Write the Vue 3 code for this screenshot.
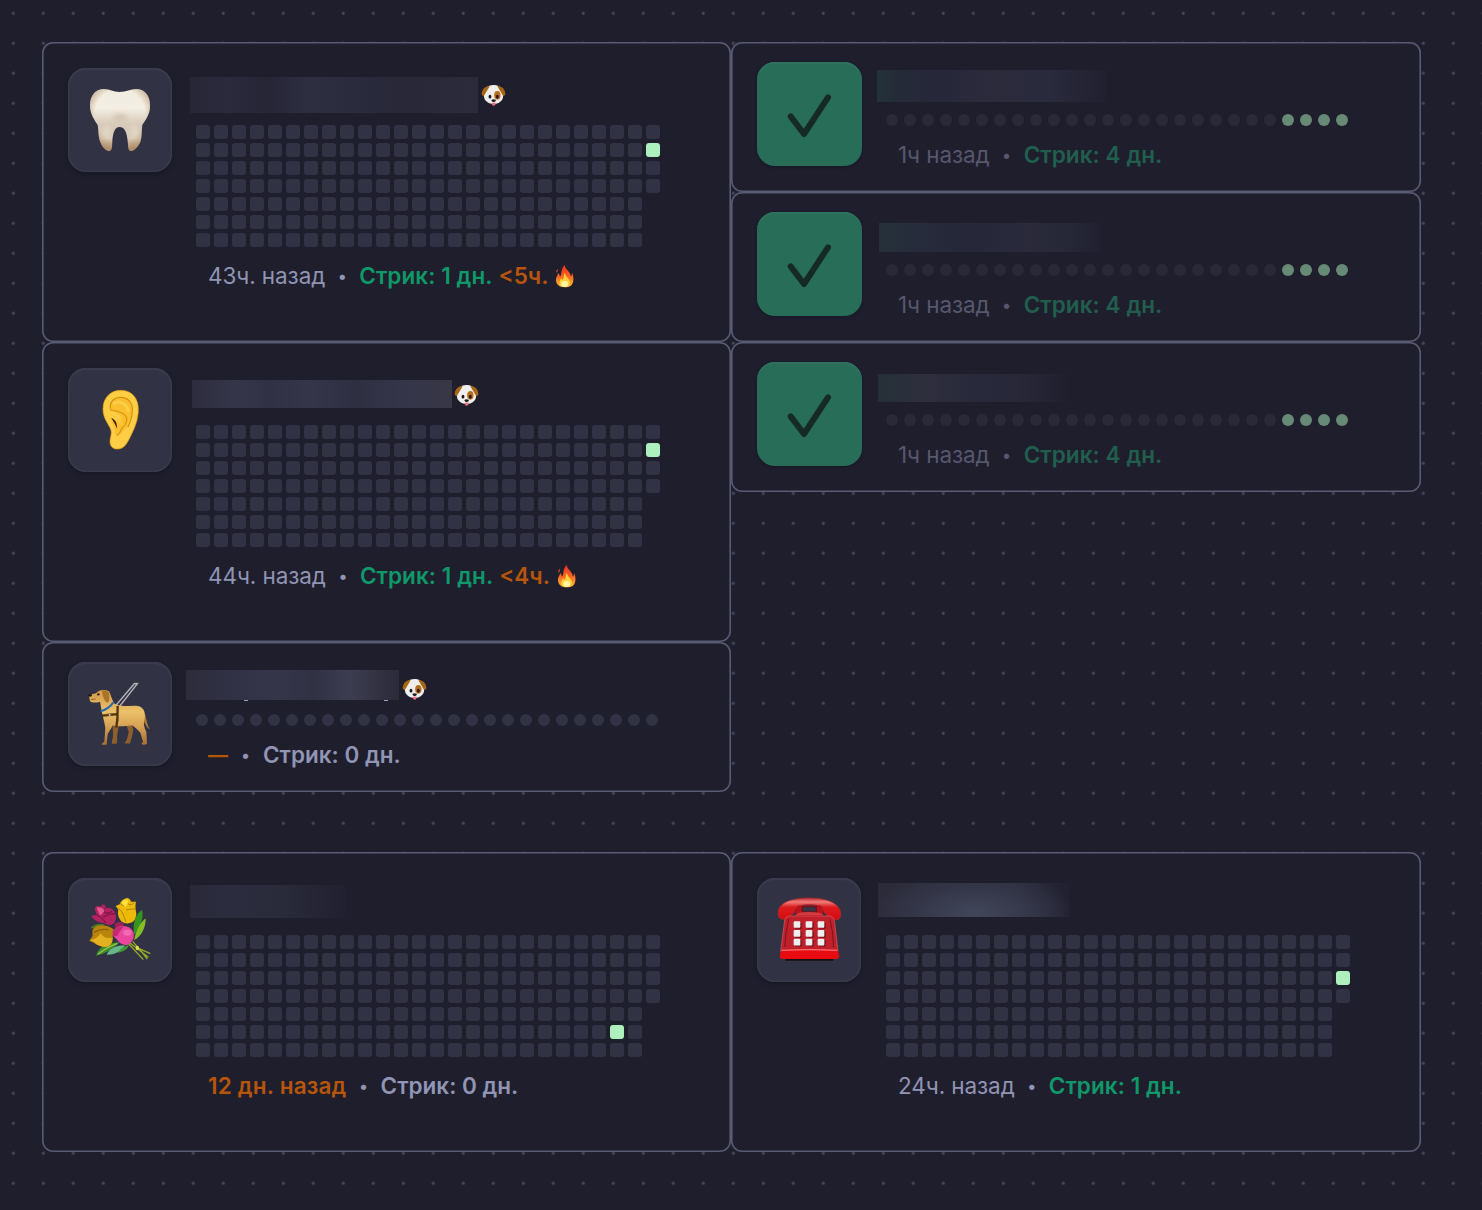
<script setup>
const columns = 26
const weeks = Array.from({ length: columns * 7 - 3 }, (_, i) => i)
const days = Array.from({ length: columns }, (_, i) => i)

const groups = [
  {
    id: 'daily',
    columns: [
      [
        { id: 'tooth', tall: true, pet: true, hit: 176, ago: '43ч. назад', streak: 'Стрик: 1 дн.', left: '<5ч.' },
        { id: 'ear', tall: true, pet: true, hit: 176, ago: '44ч. назад', streak: 'Стрик: 1 дн.', left: '<4ч.' },
        { id: 'dog', pet: true, ago: '—', late: true, streak: 'Стрик: 0 дн.', cold: true },
      ],
      [
        { id: 'first', done: true, ago: '1ч назад', streak: 'Стрик: 4 дн.' },
        { id: 'second', done: true, ago: '1ч назад', streak: 'Стрик: 4 дн.' },
        { id: 'third', done: true, ago: '1ч назад', streak: 'Стрик: 4 дн.' },
      ],
    ],
  },
  {
    id: 'weekly',
    columns: [
      [{ id: 'flowers', tall: true, hit: 166, ago: '12 дн. назад', late: true, streak: 'Стрик: 0 дн.', cold: true }],
      [{ id: 'phone', tall: true, hit: 177, ago: '24ч. назад', streak: 'Стрик: 1 дн.' }],
    ],
  },
]
</script>

<template>
  <main class="board">
    <section v-for="group in groups" :key="group.id" class="group">
      <div v-for="(column, c) in group.columns" :key="c" class="column">
        <article v-for="item in column" :key="item.id" class="card" :class="[item.id, { tall: item.tall, done: item.done }]">
          <div class="tile">
            <svg v-if="item.done" viewBox="82 94 312 312">
              <path d="M183 257 L223 310 L295 200" fill="none" stroke="#152a24" stroke-width="18" stroke-linecap="round" stroke-linejoin="round" />
            </svg>

            <svg v-else-if="item.id === 'tooth'" viewBox="114 114 312 312">
              <defs>
                <linearGradient id="enamel" x1="0" y1="0" x2="0" y2="1">
                  <stop offset="0" stop-color="#f1ece0" />
                  <stop offset=".3" stop-color="#f4efe4" />
                  <stop offset=".58" stop-color="#d6c9b7" />
                  <stop offset=".8" stop-color="#d8cbb8" />
                  <stop offset="1" stop-color="#b58d66" />
                </linearGradient>
                <radialGradient id="enamelEdge" cx=".5" cy=".42" r=".6">
                  <stop offset=".7" stop-color="#a98862" stop-opacity="0" />
                  <stop offset="1" stop-color="#a98862" stop-opacity=".65" />
                </radialGradient>
                <filter id="soft" x="-50%" y="-50%" width="200%" height="200%"><feGaussianBlur stdDeviation="8" /></filter>
              </defs>
              <path d="M220 177 C242 177 248 186 268 186 C290 186 300 177 320 177 C348 179 360 200 360 228 C360 255 345 272 337 285 C334 305 337 325 329 340 C321 354 311 363 303 363 C293 362 295 347 293 333 C291 309 284 291 269 291 C254 291 249 309 247 333 C246 350 247 363 237 363 C226 362 216 350 211 336 C204 318 206 300 203 285 C193 270 180 252 180 226 C181 199 193 179 220 177 Z" fill="url(#enamel)" />
              <path d="M220 177 C242 177 248 186 268 186 C290 186 300 177 320 177 C348 179 360 200 360 228 C360 255 345 272 337 285 C334 305 337 325 329 340 C321 354 311 363 303 363 C293 362 295 347 293 333 C291 309 284 291 269 291 C254 291 249 309 247 333 C246 350 247 363 237 363 C226 362 216 350 211 336 C204 318 206 300 203 285 C193 270 180 252 180 226 C181 199 193 179 220 177 Z" fill="url(#enamelEdge)" />
              <ellipse cx="270" cy="262" rx="22" ry="10" fill="#bfae98" opacity=".5" filter="url(#soft)" />
              <ellipse cx="230" cy="305" rx="8" ry="22" fill="#eee5d5" opacity=".6" filter="url(#soft)" />
              <ellipse cx="313" cy="305" rx="8" ry="22" fill="#eee5d5" opacity=".6" filter="url(#soft)" />
            </svg>

            <svg v-else-if="item.id === 'ear'" viewBox="84 84 312 312">
              <path d="M243 151 C276 151 295 176 295 207 C295 239 284 264 271 290 C260 312 252 327 232 327 C217 327 210 317 210 305 C210 292 216 284 213 271 C208 253 189 238 189 207 C189 174 211 151 243 151 Z" fill="#ffce45" stroke="#e69e10" stroke-width="2" />
              <path d="M211 201 C210 180 225 172 241 172 C264 172 276 188 276 207 C277 240 258 269 241 282 C235 289 225 288 225 279 C224 266 219 246 207 232 C220 236 231 242 237 250 C249 239 245 226 234 221 C225 216 212 214 211 201 Z" fill="#f8bf30" />
              <path d="M211 205 C209 182 225 172 241 172 C266 172 279 190 277 214 C276 231 270 249 264 260" fill="none" stroke="#d98f08" stroke-width="3.5" stroke-linecap="round" />
              <path d="M212 210 C229 213 249 214 258 229 C266 244 253 258 246 265 C240 272 241 283 231 286" fill="none" stroke="#e29a0c" stroke-width="4" stroke-linecap="round" />
              <path d="M222 190 C239 182 258 188 264 212" fill="none" stroke="#ffce48" stroke-width="9" stroke-linecap="round" />
              <path d="M214 234 C225 238 232 248 231 266 C228 259 223 247 214 234 Z" fill="#3b1b04" />
              <path d="M214 227 C235 229 246 240 243 254" fill="none" stroke="#ffc83a" stroke-width="5" stroke-linecap="round" />
            </svg>

            <svg v-else-if="item.id === 'dog'" viewBox="84 96 312 312">
              <defs>
                <linearGradient id="coat" x1="0" y1="0" x2="0" y2="1">
                  <stop offset="0" stop-color="#d09a48" />
                  <stop offset=".4" stop-color="#ecc06a" />
                  <stop offset=".7" stop-color="#d39d50" />
                  <stop offset="1" stop-color="#a56e35" />
                </linearGradient>
              </defs>
              <path d="M228 226 L283 161 L292 161 L239 229" fill="none" stroke="#85868d" stroke-width="5" />
              <path d="M228 226 L283 161 L292 161 L239 229" fill="none" stroke="#dedee2" stroke-width="2" />
              <path d="M218 278 L219 322 Q214 337 216 341 L229 341 Q233 336 231 320 L238 280 Z M257 278 L266 305 Q263 329 253 340 L268 341 Q274 334 280 300 L274 275 Z" fill="#8c5f2c" />
              <path d="M306 242 C322 251 316 278 330 298 C318 292 315 278 307 267 Z" fill="#aa7838" />
              <path d="M146 195 L168 190 C175 179 194 177 207 184 C214 197 216 210 222 220 C237 232 262 226 288 227 C308 228 318 243 314 266 C309 280 313 292 319 306 L321 342 Q310 347 304 342 L309 335 L301 308 C291 297 284 291 275 286 C255 289 233 291 219 286 L203 312 L200 344 L185 344 Q184 339 193 335 L196 294 C193 273 185 249 183 232 L180 215 C169 219 154 219 150 213 Z" fill="url(#coat)" />
              <path d="M186 183 C200 178 210 186 208 203 C208 215 204 221 198 216 C190 208 188 195 186 183 Z" fill="#a97428" />
              <ellipse cx="150" cy="196" rx="6" ry="4" fill="#221c1c" />
              <circle cx="175" cy="193" r="3.5" fill="#2c1809" />
              <path d="M153 209 L167 207" stroke="#7f5120" stroke-width="2.5" />
              <path d="M182 244 Q207 236 220 217" fill="none" stroke="#2469ad" stroke-width="6" />
              <path d="M186 257 L234 252 M233 228 Q234 264 229 293" fill="none" stroke="#4b310c" stroke-width="7" />
              <path d="M188 254 L229 250 M236 234 L235 275" fill="none" stroke="#966b25" stroke-width="1.8" />
              <path d="M208 252 L210 259" stroke="#c6bea4" stroke-width="5" />
            </svg>

            <svg v-else-if="item.id === 'flowers'" viewBox="84 84 312 312">
              <path d="M306 180 C288 191 276 218 283 255 C299 233 313 206 306 180 Z" fill="#36951f" />
              <path d="M317 205 C304 215 290 235 282 270 C302 263 318 233 317 205 Z" fill="#87bd24" />
              <path d="M151 235 Q164 219 190 222 L204 238 Z" fill="#487529" />
              <path d="M168 317 C178 285 208 279 239 277 C223 296 195 312 168 317 Z" fill="#3f8c2b" />
              <path d="M174 313 Q200 292 232 280" fill="none" stroke="#91c64b" stroke-width="4" />
              <path d="M200 314 C209 294 230 286 255 286 C242 306 224 315 200 314 Z" fill="#69b68c" />
              <path d="M234 309 Q240 292 267 285 Q262 302 234 309 Z" fill="#3e9730" />
              <path d="M258 273 L310 329 M267 277 L325 322 M278 274 L296 295 L331 311 M297 295 L322 327" fill="none" stroke="#95ad28" stroke-width="4" />
              <path d="M153 198 L171 194 Q160 175 169 168 L183 170 Q184 161 194 164 L198 175 Q219 170 226 191 Q232 208 220 221 Q207 230 190 219 Q169 219 153 198 Z" fill="#b52262" />
              <path d="M174 174 Q182 189 193 178 Q191 198 216 184 M170 195 Q187 202 197 219 M190 201 Q214 190 226 191" fill="none" stroke="#7d1746" stroke-width="4" />
              <path d="M170 173 Q183 169 194 181 Q183 199 179 194 Z" fill="#e45a91" />
              <path d="M227 168 L239 163 Q244 148 260 144 Q270 144 273 155 L288 155 Q284 170 289 191 Q288 207 278 216 Q260 225 245 215 Q230 197 235 179 Z" fill="#edba09" />
              <path d="M240 157 Q249 177 260 156 Q269 171 282 159 M235 174 Q249 184 258 217 M258 180 Q273 176 287 177" fill="none" stroke="#b58406" stroke-width="3" />
              <path d="M244 158 Q257 142 266 153 L257 172 Z" fill="#ffdf42" />
              <path d="M148 272 L158 257 Q153 235 171 227 Q198 221 221 238 L218 264 Q221 284 198 291 Q177 290 161 278 Z" fill="#b88409" />
              <path d="M150 271 Q171 267 182 250 Q192 268 218 263 Q216 290 196 291 Q175 289 162 276 Z" fill="#e3b11f" />
              <path d="M162 247 Q180 235 206 239" fill="none" stroke="#8b6106" stroke-width="4" />
              <path d="M224 223 Q234 208 251 221 L249 240 L226 244 Z" fill="#a0205a" />
              <path d="M219 242 Q233 226 250 228 Q271 228 281 247 Q285 275 263 284 Q244 288 229 267 L219 257 Z" fill="#ea46a0" />
              <path d="M218 241 Q235 227 252 230 Q240 239 232 259 L218 258 Z" fill="#c42a72" />
              <ellipse cx="262" cy="248" rx="13" ry="9" fill="#f26ab4" />
              <ellipse cx="292" cy="294" rx="5" ry="7" fill="#e2da56" />
            </svg>

            <svg v-else viewBox="112 84 312 312">
              <defs>
                <linearGradient id="handset" x1="0" y1="0" x2="0" y2="1">
                  <stop offset="0" stop-color="#b8282d" />
                  <stop offset=".18" stop-color="#ee7f7d" />
                  <stop offset=".42" stop-color="#dc1b1f" />
                  <stop offset="1" stop-color="#d60c10" />
                </linearGradient>
              </defs>
              <path d="M197 325 H341 V332 H197 Z" fill="#170f15" />
              <path d="M228 166 H310 V200 H228 Z" fill="#ba1219" />
              <path d="M248 170 H290 V186 H248 Z" fill="#34374a" stroke="#721019" stroke-width="4" />
              <path d="M176 184 C180 155 222 144 269 144 C317 144 356 158 362 184 C365 200 360 209 352 209 C339 209 331 203 319 193 C308 184 312 168 302 167 Q269 160 237 167 C225 169 229 185 219 193 C206 202 199 208 187 208 C175 205 175 195 176 184 Z" fill="url(#handset)" stroke="#b72b31" stroke-width="2" />
              <path d="M207 198 H330 Q342 199 344 211 L355 305 H183 L195 210 Q197 200 207 198 Z" fill="#c0202a" stroke="#df5a5e" stroke-width="2" />
              <path d="M207 207 Q197 250 195 291 M331 207 Q341 250 342 291" fill="none" stroke="#79151f" stroke-width="3" />
              <path d="M184 299 Q269 294 354 299 L359 319 Q358 327 350 327 H188 Q180 326 180 319 Z" fill="#e80c10" />
              <path d="M185 301 Q269 297 353 301" fill="none" stroke="#f1777a" stroke-width="4" />
              <path d="M238 188 Q269 184 300 188 L312 196 H226 Z" fill="#d33b40" />
              <g v-for="row in 3" :key="row">
                <g v-for="col in 3" :key="col">
                  <rect :x="190 + col * 36" :y="190 + row * 26.5" width="20" height="20" rx="3" fill="#741019" />
                  <rect :x="186 + col * 36" :y="187 + row * 26.5" width="20" height="20" rx="3" fill="#eeeeef" />
                </g>
              </g>
            </svg>
          </div>

          <div class="body">
            <header class="title">
              <span class="mask"></span>
              <svg v-if="item.pet" class="pet" viewBox="124 73 75 66">
                <path d="M161 76 C178 74 187 85 190 103 C193 120 181 133 162 133 C143 133 130 120 133 103 C137 84 145 76 161 76 Z" fill="#eeeeed" />
                <path d="M146 79 Q128 83 126 102 Q126 110 133 108 Q140 97 150 80 Z M177 79 Q195 83 197 102 Q197 110 190 108 Q183 97 173 80 Z" fill="#a96612" />
                <ellipse cx="173" cy="107" rx="9.5" ry="13" fill="#b36b1c" />
                <ellipse cx="151" cy="111" rx="4.2" ry="5.5" fill="#1d1513" />
                <ellipse cx="173" cy="111" rx="4.2" ry="5.5" fill="#29170c" />
                <path d="M155 121 Q162 117 169 121 Q168 126 162 128 Q156 126 155 121 Z" fill="#211b1c" />
                <path d="M156 129 H168 Q168 138 162 138 Q156 138 156 129 Z" fill="#ec7184" />
              </svg>
            </header>

            <div v-if="item.tall" class="weeks">
              <i v-for="n in weeks" :key="n" :class="{ hit: n === item.hit }"></i>
            </div>
            <div v-else class="days">
              <i v-for="n in days" :key="n" :class="{ hit: item.done && n > 21 }"></i>
            </div>

            <footer class="meta">
              <span class="ago" :class="{ late: item.late }">{{ item.ago }}</span>
              <span class="sep">•</span>
              <span class="streak" :class="{ cold: item.cold }">{{ item.streak }}</span>
              <span v-if="item.left" class="left">{{ item.left }}</span>
              <svg v-if="item.left" class="fire" viewBox="1098 251 58 72">
                <defs>
                  <linearGradient id="flame" x1="0" y1="0" x2="0" y2="1">
                    <stop offset="0" stop-color="#e62b20" />
                    <stop offset=".5" stop-color="#fb6322" />
                    <stop offset="1" stop-color="#ffc02f" />
                  </linearGradient>
                </defs>
                <path d="M1127 253 C1128 268 1145 273 1146 289 Q1151 282 1149 276 C1156 292 1155 309 1146 316 Q1137 322 1127 321 C1110 321 1100 311 1101 297 C1102 287 1107 286 1107 277 Q1113 283 1113 289 C1120 281 1114 267 1127 253 Z M1107 265 Q1100 271 1102 277 Q1108 274 1107 265 Z" fill="url(#flame)" />
                <path d="M1128 278 C1129 290 1144 296 1143 309 Q1139 320 1127 320 Q1112 319 1111 307 Q1112 299 1117 294 Q1119 299 1121 299 C1127 291 1122 285 1128 278 Z" fill="#ffd33d" />
                <ellipse cx="1127" cy="311" rx="10" ry="9" fill="#fff6a6" />
              </svg>
            </footer>
          </div>
        </article>
      </div>
    </section>
  </main>
</template>

<style>
body {
  background: #1f1e2d;
}
</style>

<style scoped>
.board {
  box-sizing: border-box;
  width: 1482px;
  height: 1210px;
  padding: 42px 0 0 42px;
  display: flex;
  flex-direction: column;
  gap: 60px;
  overflow: hidden;
  background: #1f1e2d radial-gradient(circle at 15px 15px, #4a4a5e 0, #4a4a5e 1px, transparent 2px) -1.7px -1.7px / 30px 30px;
  font-family: Inter, "Liberation Sans", sans-serif;
}
.group {
  display: flex;
  align-items: flex-start;
}
.column {
  width: 689.4px;
  display: flex;
  flex-direction: column;
}
.card {
  box-sizing: border-box;
  height: 150px;
  padding: 20px 0 0 26px;
  display: flex;
  align-items: flex-start;
  background: #1f1e2d;
  border-radius: 11px;
  box-shadow: inset 0 0 0 1.6px #585b73;
}
.card.tall {
  height: 300px;
  padding-top: 26px;
}
.tile {
  flex: none;
  width: 104px;
  height: 104px;
  border-radius: 18px;
  background: #313244;
  box-shadow: inset 0 0 0 1.5px #393a4c, inset 0 2px 1px #404153, 0 2px 4px #11111b88;
}
.tile svg {
  display: block;
  width: 104px;
  height: 104px;
}
.done .tile {
  width: 104.6px;
  background: #286d58;
  box-shadow: inset 0 2px 1px #2e735f, 0 1px 3px #11111b88;
}
.body {
  margin-left: 12px;
}
.phone .body {
  margin-left: 12.6px;
}
.title {
  height: 51.5px;
  display: flex;
  align-items: flex-start;
}
.tall .title {
  height: 57px;
}
.mask {
  flex: none;
}
.pet {
  flex: none;
  width: 25px;
  height: 22px;
}
.tooth .mask {
  width: 288px;
  height: 36px;
  margin: 9px 0 0 6px;
  background: linear-gradient(90deg, #282737, #2a2a3c 13%, #252536 27%, #2e2e41 41%, #292a3c 60%, #282838 75%, #2b2b3b);
}
.tooth .pet { margin: 16px 0 0 3px; }
.ear .mask {
  width: 260px;
  height: 28px;
  margin: 12px 0 0 8px;
  background: linear-gradient(90deg, #2d2d3e, #353649 17%, #303144 30%, #35364a 45%, #2e2f41 63%, #35364a 82%, #383745);
}
.ear .pet { margin: 15.5px 0 0 2px; }
/* descenders of the hidden title show under the bar */
.dog .mask {
  width: 213px;
  height: 31px;
  margin: 7.5px 0 0 2px;
  background:
    linear-gradient(#9a9fbd, #9a9fbd) 58px 100% / 4px 1px no-repeat,
    linear-gradient(#9a9fbd, #9a9fbd) 198px 100% / 4px 1px no-repeat,
    linear-gradient(90deg, #2c2c3b, #303144 20%, #353649 43%, #303143 60%, #3c3d50 77%, #2b2a39) 0 0 / 100% 30px no-repeat;
}
.dog .pet { margin: 15.5px 0 0 3px; }
.flowers .mask {
  width: 155px;
  height: 33px;
  margin: 6.5px 0 0 6px;
  background: linear-gradient(90deg, #292939, #2b2c3d 25%, #292a3a 60%, #212030);
}
.first .mask {
  width: 230px;
  height: 32px;
  margin: 8px 0 0 3px;
  background: linear-gradient(90deg, #233239, #252a38 10%, #27273a 28%, #2b2b3c 50%, #292a3c 75%, #212030);
}
.second .mask {
  width: 222px;
  height: 29px;
  margin: 11px 0 0 5px;
  background: linear-gradient(90deg, #253039, #272b3b 18%, #252738 40%, #2a2a3b 68%, #262737 85%, #212030);
}
.third .mask {
  width: 194px;
  height: 28px;
  margin: 12px 0 0 4px;
  background: linear-gradient(90deg, #263037, #2e2e3d 26%, #28293a 50%, #282839 72%, #1f1e2d);
}
.phone .mask {
  width: 192px;
  height: 34px;
  margin: 5px 0 0 4.5px;
  background: radial-gradient(ellipse 52% 130% at 50% 90%, #42465a, #36394b 50%, #2c2b3b00), linear-gradient(90deg, #2c2b3a, #2c2d3d 70%, #212030);
}
.weeks {
  padding-left: 12px;
  display: grid;
  grid-auto-flow: column;
  grid-template-rows: repeat(7, 14px);
  grid-auto-columns: 14px;
  gap: 4px;
}
.weeks i {
  border-radius: 3px;
  background: #313244;
}
.weeks i.hit {
  background: #adf0be;
}
.days {
  padding-left: 12px;
  display: flex;
  gap: 6px;
}
.days i {
  width: 12px;
  height: 12px;
  border-radius: 50%;
  background: #313244;
}
.done .days i {
  background: #292938;
}
.done .days i.hit {
  background: #678a77;
}
.meta {
  height: 30px;
  margin-top: 14px;
  padding-left: 24px;
  display: flex;
  align-items: center;
  font-size: 22.5px;
  line-height: 30px;
  white-space: nowrap;
  color: #9095b4;
}
.ago {
  letter-spacing: -.08px;
}
.sep {
  width: 34px;
  text-align: center;
  font-size: 17px;
}
.streak,
.left,
.late {
  font-weight: 600;
}
.late {
  letter-spacing: .22px;
}
.dog .late {
  width: 20px;
  font-size: 20px;
  font-weight: 700;
  letter-spacing: 0;
}
.dog .sep {
  width: 35px;
}
.streak {
  color: #0f9868;
  letter-spacing: .08px;
}
.streak.cold {
  color: #9095b4;
  letter-spacing: 0;
}
.left {
  margin-left: 6px;
}
.left,
.late {
  color: #b7550b;
}
.fire {
  width: 19.3px;
  height: 24px;
  margin-left: 7px;
}
.done .meta {
  color: #55586f;
}
.done .streak {
  color: #215f4d;
}
</style>
